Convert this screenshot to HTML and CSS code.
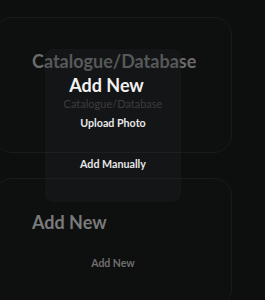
FILE: index.html
```html
<!DOCTYPE html>
<html>
<head>
<meta charset="utf-8">
<link rel="stylesheet" href="styles.css">
</head>
<body>
<div class="page">
  <section class="card card-top">
    <h2 class="card-title">Catalogue/Database</h2>
  </section>
  <section class="card card-bottom">
    <h2 class="card-title">Add New</h2>
    <button class="ghost-btn">Add New</button>
  </section>
</div>
<div class="modal">
  <h3 class="modal-title">Add New</h3>
  <p class="modal-sub">Catalogue/Database</p>
  <button class="modal-btn">Upload Photo</button>
  <button class="modal-btn">Add Manually</button>
</div>
</body>
</html>
```
FILE: styles.css
```css
html, body {
  margin: 0;
  padding: 0;
  background: #0d0e0e;
  height: 100%;
  overflow: hidden;
}
body {
  font-family: "Lato", "Noto Sans", sans-serif;
  position: relative;
}
.page {
  display: flex;
  flex-direction: column;
  gap: 25px;
  padding-top: 17px;
  margin-left: -6px;
  width: 238px;
}
.card {
  border: 1px solid #1a1b1c;
  border-radius: 18px;
  background: #0e0f0f;
  box-sizing: border-box;
  padding: 0 0 0 37px;
}
.card-top {
  height: 136px;
  padding-top: 31px;
}
.card-bottom {
  height: 130px;
  padding-top: 31px;
  display: flex;
  flex-direction: column;
}
.card-title {
  margin: 0;
  font-size: 18px;
  font-weight: 700;
  color: #6b6b6b;
  line-height: 24px;
}
.card-bottom .card-title {
  color: #7a7a7a;
}
.ghost-btn {
  align-self: center;
  margin: 23px 0 0 -37px;
  background: none;
  border: none;
  font-family: inherit;
  font-size: 10.5px;
  font-weight: 700;
  color: #6e6e6e;
  padding: 0;
}
.modal {
  position: absolute;
  left: 45px;
  top: 49px;
  width: 136px;
  height: 153px;
  border-radius: 8px;
  background: rgba(36, 38, 42, 0.28);
  display: flex;
  flex-direction: column;
  align-items: center;
  box-sizing: border-box;
  padding-top: 24px;
}
.modal-title {
  margin: 0 13px 0 0;
  font-size: 18px;
  font-weight: 700;
  color: #f2f2f2;
  line-height: 24px;
}
.modal-sub {
  margin: 0;
  font-size: 11px;
  color: #3c3d3e;
  line-height: 14px;
}
.modal-btn {
  background: none;
  border: none;
  font-family: inherit;
  font-size: 10.7px;
  font-weight: 700;
  color: #e8e8e8;
  padding: 0;
  line-height: 15px;
  margin-top: 4px;
}
.modal-btn + .modal-btn {
  margin-top: 26px;
}
```
